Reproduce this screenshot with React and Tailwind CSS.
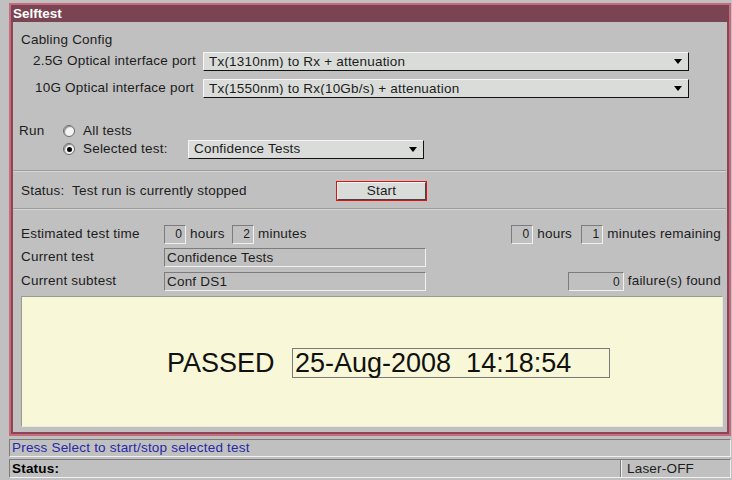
import React from "react";

// Sunken read-only field (Motif-style inset bevel)
function Field({ className = "", children }) {
  return (
    <div
      className={`h-[19px] border border-t-[#7c7c7c] border-l-[#7c7c7c] border-b-[#f0f0f0] border-r-[#f0f0f0] flex items-center leading-none ${className}`}
    >
      {children}
    </div>
  );
}

function NumBox({ value, className = "" }) {
  return (
    <Field className={`h-[18px] w-[22px] justify-end pr-[3px] text-[12px] ${className}`}>
      {value}
    </Field>
  );
}

// Option menu button with the small black arrow at its right
function Combo({ text, className = "" }) {
  return (
    <div
      className={`h-[19px] bg-[#d9dcd9] border border-t-[#f6f6f6] border-l-[#f6f6f6] border-b-[#111] border-r-[#111] flex items-center pl-[5px] pr-[6px] ${className}`}
    >
      <span className="flex-1 truncate leading-none">{text}</span>
      <svg width="8" height="5" viewBox="0 0 8 5" className="shrink-0">
        <path d="M0 0 H8 L4 5 Z" fill="#000" />
      </svg>
    </div>
  );
}

function Radio({ checked }) {
  return (
    <div className="w-[12px] h-[12px] rounded-full bg-[#f4f4f4] border border-[#6a6a6a] shadow-[inset_1px_1px_1px_#8a8a8a] flex items-center justify-center">
      {checked && <div className="w-[5px] h-[5px] rounded-full bg-black" />}
    </div>
  );
}

function Separator() {
  return (
    <div className="-ml-[6px] flex flex-col">
      <div className="h-px bg-[#9c9c9c]" />
      <div className="h-px bg-[#d6d6d6]" />
    </div>
  );
}

export default function App() {
  return (
    <div className="w-[732px] h-[480px] bg-[#c0c0c0] overflow-hidden text-[13.5px] tracking-[0.2px] text-[#1c1c1c] font-['Liberation_Sans',Arial,sans-serif] pt-[3px]">
      {/* Selftest window */}
      <div className="ml-[9px] w-[722px] h-[433px] border-2 border-[#c96a7c] flex flex-col">
        <div className="h-[17px] bg-[#7b4452] text-white font-bold leading-[17px] pl-[2px] shrink-0 tracking-normal">
          Selftest
        </div>
        <div className="flex-1 border-x-2 border-b-2 border-[#8a4656] flex flex-col pl-[6px] pr-[1px]">
          {/* Cabling configuration */}
          <div className="mt-[10px] h-[16px] leading-[16px] pl-[2px]">Cabling Config</div>
          <div className="mt-[4px] flex items-center h-[19px]">
            <div className="w-[184px] pl-[14px]">2.5G Optical interface port</div>
            <Combo className="w-[486px]" text="Tx(1310nm) to Rx + attenuation" />
          </div>
          <div className="mt-[8px] flex items-center h-[19px]">
            <div className="w-[184px] pl-[16px]">10G Optical interface port</div>
            <Combo className="w-[486px]" text="Tx(1550nm) to Rx(10Gb/s) + attenuation" />
          </div>

          {/* Run selection */}
          <div className="mt-[24px] flex items-center h-[18px]">
            <div className="w-[44px]">Run</div>
            <Radio />
            <div className="ml-[8px]">All tests</div>
          </div>
          <div className="flex items-center h-[18px]">
            <div className="w-[44px]" />
            <Radio checked />
            <div className="ml-[8px] w-[105px]">Selected test:</div>
            <Combo className="w-[236px]" text="Confidence Tests" />
          </div>

          <div className="mt-[12px]">
            <Separator />
          </div>

          {/* Run status */}
          <div className="mt-[9px] flex items-center h-[20px]">
            <div className="w-[317px] pl-[2px]">Status:&nbsp; Test run is currently stopped</div>
            <div className="w-[91px] h-[20px] border border-[#e01010] flex">
              <div className="flex-1 bg-[#d9dcd9] border border-t-[#f6f6f6] border-l-[#f6f6f6] border-b-[#444] border-r-[#444] flex items-center justify-center leading-none">
                Start
              </div>
            </div>
          </div>

          <div className="mt-[7px]">
            <Separator />
          </div>

          {/* Timing and progress */}
          <div className="mt-[15px] flex items-center h-[18px] pl-[2px]">
            <div className="w-[143px]">Estimated test time</div>
            <NumBox value="0" />
            <div className="ml-[4px] w-[42px]">hours</div>
            <NumBox value="2" />
            <div className="ml-[4px]">minutes</div>
            <div className="flex-1" />
            <NumBox value="0" />
            <div className="ml-[4px] w-[44px]">hours</div>
            <NumBox value="1" />
            <div className="ml-[4px] pr-[5px]">minutes remaining</div>
          </div>
          <div className="mt-[5px] flex items-center h-[19px] pl-[2px]">
            <div className="w-[143px]">Current test</div>
            <Field className="w-[262px] pl-[2px]">Confidence Tests</Field>
          </div>
          <div className="mt-[5px] flex items-center h-[19px] pl-[2px]">
            <div className="w-[143px]">Current subtest</div>
            <Field className="w-[262px] pl-[2px]">Conf DS1</Field>
            <div className="flex-1" />
            <Field className="w-[56px] justify-end pr-[3px] text-[12px]">0</Field>
            <div className="ml-[4px] pr-[5px]">failure(s) found</div>
          </div>

          {/* Result panel */}
          <div className="mt-[5px] ml-[2px] mr-[3px] h-[131px] bg-[#f8f8d8] border border-t-[#9a9a90] border-l-[#9a9a90] border-b-[#e8e8e0] border-r-[#e8e8e0] flex items-start pt-[51px] pl-[145px] tracking-normal">
            <div className="w-[125px] h-[30px] flex items-center text-[27px] leading-none text-[#111]">PASSED</div>
            <div className="w-[318px] h-[30px] border border-[#7a7a7a] flex items-center pl-[2px] text-[27px] leading-none text-[#111] whitespace-pre">
              25-Aug-2008  14:18:54
            </div>
          </div>
        </div>
      </div>

      {/* Help line */}
      <div className="mt-[3px] ml-[9px] w-[722px] h-[18px] border border-t-[#7c7c7c] border-l-[#7c7c7c] border-b-[#f0f0f0] border-r-[#f0f0f0] flex items-center pl-[2px] text-[#2828a8] leading-none">
        Press Select to start/stop selected test
      </div>

      {/* Status bar */}
      <div className="mt-[2px] ml-[9px] w-[722px] h-[19px] border border-t-[#7c7c7c] border-l-[#7c7c7c] border-b-[#f0f0f0] border-r-[#f0f0f0] flex items-center leading-none">
        <div className="w-[610px] pl-[2px] font-bold text-black">Status:</div>
        <div className="h-full border-l border-l-[#7c7c7c] shadow-[inset_1px_0_0_#f0f0f0] flex items-center pl-[6px]">
          Laser-OFF
        </div>
      </div>
    </div>
  );
}
